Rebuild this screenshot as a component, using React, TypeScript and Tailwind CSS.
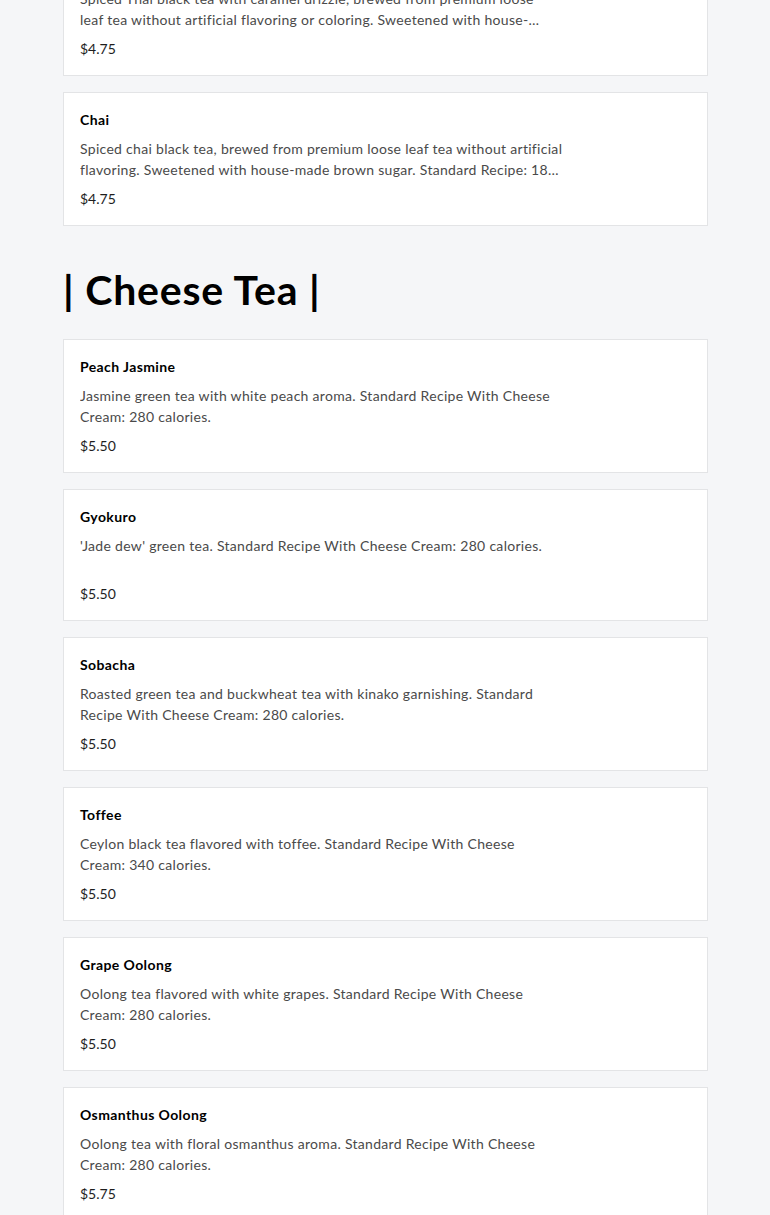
import React from 'react'

interface MenuItem {
  name: string
  description: string
  price: string
}

interface MenuSection {
  title: string
  items: MenuItem[]
}

const SECTIONS: MenuSection[] = [
  {
    title: 'Milk Tea',
    items: [
      {
        name: 'Thai Tea',
        description:
          'Spiced Thai black tea with caramel drizzle, brewed from premium loose leaf\u00a0tea without artificial flavoring or coloring. Sweetened with house-made brown sugar. Standard Recipe: 190 calories.',
        price: '$4.75',
      },
      {
        name: 'Chai',
        description:
          'Spiced chai black tea, brewed from premium loose leaf tea without artificial flavoring. Sweetened with house-made brown sugar. Standard Recipe: 180 calories.',
        price: '$4.75',
      },
    ],
  },
  {
    title: '| Cheese Tea |',
    items: [
      {
        name: 'Peach Jasmine',
        description: 'Jasmine green tea with white peach aroma. Standard Recipe With Cheese Cream: 280 calories.',
        price: '$5.50',
      },
      {
        name: 'Gyokuro',
        description: "'Jade dew' green tea. Standard Recipe With Cheese Cream: 280 calories.",
        price: '$5.50',
      },
      {
        name: 'Sobacha',
        description:
          'Roasted green tea and buckwheat tea with kinako garnishing. Standard Recipe With Cheese Cream: 280 calories.',
        price: '$5.50',
      },
      {
        name: 'Toffee',
        description: 'Ceylon black tea flavored with toffee. Standard Recipe With Cheese Cream: 340 calories.',
        price: '$5.50',
      },
      {
        name: 'Grape Oolong',
        description: 'Oolong tea flavored with white grapes. Standard Recipe With Cheese Cream: 280 calories.',
        price: '$5.50',
      },
      {
        name: 'Osmanthus Oolong',
        description: 'Oolong tea with floral osmanthus aroma. Standard Recipe With Cheese Cream: 280 calories.',
        price: '$5.75',
      },
    ],
  },
]

function ItemCard({ item }: { item: MenuItem }) {
  return (
    <div className="border border-[#e3e4e6] bg-white px-4 pt-[17px] pb-[16px]">
      <h3 className="text-[14px] leading-5 font-bold tracking-[0.4px] text-black">{item.name}</h3>
      <p className="mt-2 min-h-[40px] max-w-[483px] text-[14px] leading-[21px] tracking-[0.3px] text-[#4a4a4a] line-clamp-2">
        {item.description}
      </p>
      <p className="mt-2 text-[14px] leading-[21px] text-[#1e1e1e]">{item.price}</p>
    </div>
  )
}

export default function App() {
  return (
    <div className="min-h-screen overflow-hidden bg-[#f5f6f8] pl-[63px] pr-[62px] font-['Lato',sans-serif]">
      <div className="-mt-[58px]">
        {SECTIONS.map((section, i) => (
          <section key={section.title}>
            {i > 0 && (
              <h2 className="mt-[40px] mb-[25px] text-[41px] leading-[48px] font-bold tracking-[0.8px] text-black">
                {section.title}
              </h2>
            )}
            <div className="space-y-4">
              {section.items.map((item) => (
                <ItemCard key={item.name} item={item} />
              ))}
            </div>
          </section>
        ))}
      </div>
    </div>
  )
}
